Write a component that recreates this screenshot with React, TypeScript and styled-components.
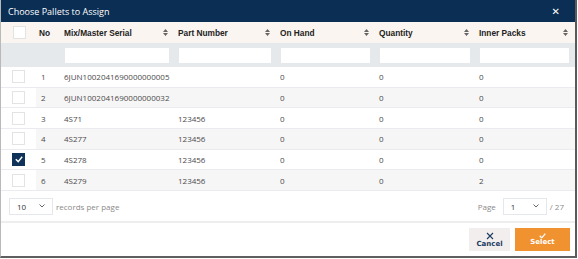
import styled, { createGlobalStyle } from "styled-components";

const GlobalStyle = createGlobalStyle`
  html, body {
    margin: 0;
    padding: 0;
    background: #ffffff;
  }
  body {
    font-family: "Open Sans", "Liberation Sans", sans-serif;
  }
`;

const COLS = "35px 25px 114px 102px 99px 100px 1fr";

const Modal = styled.div`
  width: 574px;
  height: 256px;
  border-left: 1px solid #b9b9b9;
  border-right: 2px solid #5a5a5a;
  border-bottom: 2px solid #5f5f5f;
  display: flex;
  flex-direction: column;
  background: #fff;
  overflow: hidden;
`;

const TitleBar = styled.div`
  height: 22px;
  background: #0b2e54;
  color: #fff;
  display: flex;
  align-items: center;
  justify-content: space-between;
  padding: 0 15px 0 7px;
  font-size: 9px;
  flex-shrink: 0;
`;

const Close = styled.span`
  font-family: "DejaVu Sans", sans-serif;
  font-size: 10px;
  font-weight: bold;
`;

const Row = styled.div<{ $bg?: string; $h: number; $line?: boolean }>`
  display: grid;
  grid-template-columns: ${COLS};
  height: ${(p) => p.$h}px;
  box-sizing: border-box;
  background: ${(p) => p.$bg ?? "#fff"};
  border-bottom: ${(p) => (p.$line ? "1px solid #e9ebef" : "none")};
  flex-shrink: 0;
`;

const HeadCell = styled.div`
  display: flex;
  align-items: center;
  justify-content: space-between;
  padding: 0 7px 0 3px;
  font-family: "Liberation Sans", Arial, sans-serif;
  font-weight: bold;
  font-size: 8.3px;
  color: #222;
`;

const FilterCell = styled.div`
  display: flex;
  align-items: center;
  padding: 0 6px 0 4px;
`;

const FilterInput = styled.div`
  height: 15px;
  width: 100%;
  background: #fff;
`;

const Cell = styled.div<{ $white?: boolean }>`
  display: flex;
  align-items: center;
  padding-left: 3px;
  font-size: 8px;
  color: #4a4a4a;
  background: ${(p) => (p.$white ? "#fff" : "transparent")};
`;

const Box = styled.div<{ $checked?: boolean }>`
  width: 13px;
  height: 13px;
  box-sizing: border-box;
  margin-left: 8px;
  background: ${(p) => (p.$checked ? "#0f3358" : "#fff")};
  border: 1px solid ${(p) => (p.$checked ? "#0f3358" : "#e3e3e3")};
  display: flex;
  align-items: center;
  justify-content: center;
`;

const Pager = styled.div`
  height: 30px;
  display: flex;
  align-items: center;
  justify-content: space-between;
  padding: 0 11px 0 8px;
  font-size: 8px;
  color: #8a8a8a;
  flex-shrink: 0;
`;

const PagerGroup = styled.div<{ $gap: number }>`
  display: flex;
  align-items: center;
  gap: ${(p) => p.$gap}px;
`;

const Select = styled.div<{ $w: number }>`
  width: ${(p) => p.$w}px;
  height: 17px;
  box-sizing: border-box;
  border: 1px solid #e4e7ec;
  display: flex;
  align-items: center;
  justify-content: space-between;
  padding: 0 7px 0 7px;
  font-size: 8px;
  color: #333;
`;

const Separator = styled.div`
  height: 2px;
  background: #eeeeee;
  flex-shrink: 0;
`;

const Actions = styled.div`
  flex: 1;
  display: flex;
  justify-content: flex-end;
  align-items: center;
  gap: 5px;
  padding: 0 5px 0 0;
`;

const ActionButton = styled.div<{ $primary?: boolean }>`
  height: 23px;
  width: ${(p) => (p.$primary ? 55 : 41)}px;
  background: ${(p) => (p.$primary ? "#f0922f" : "#f2eeee")};
  color: ${(p) => (p.$primary ? "#fff" : "#1b3b63")};
  display: flex;
  flex-direction: column;
  align-items: center;
  justify-content: center;
  font-family: "DejaVu Sans", sans-serif;
  font-weight: bold;
  font-size: 7px;
  line-height: 8px;
`;

const SortIcon = () => (
  <svg width="5" height="7" viewBox="0 0 5 7">
    <path d="M2.5 0 L5 3 H0 Z M0 4 H5 L2.5 7 Z" fill="#666" />
  </svg>
);

const Check = ({ color, size }: { color: string; size: number }) => (
  <svg width={size} height={size * 0.8} viewBox="0 0 10 8">
    <path d="M1 4 L4 7 L9 1" fill="none" stroke={color} strokeWidth="1.8" />
  </svg>
);

const Chevron = () => (
  <svg width="6" height="4" viewBox="0 0 6 4">
    <path d="M0.5 0.5 L3 3 L5.5 0.5" fill="none" stroke="#666" strokeWidth="1" />
  </svg>
);

const headers = ["Mix/Master Serial", "Part Number", "On Hand", "Quantity", "Inner Packs"];

const rows = [
  { no: 1, serial: "6JUN1002041690000000005", part: "", onHand: "0", qty: "0", inner: "0" },
  { no: 2, serial: "6JUN1002041690000000032", part: "", onHand: "0", qty: "0", inner: "0" },
  { no: 3, serial: "4S71", part: "123456", onHand: "0", qty: "0", inner: "0" },
  { no: 4, serial: "4S277", part: "123456", onHand: "0", qty: "0", inner: "0" },
  { no: 5, serial: "4S278", part: "123456", onHand: "0", qty: "0", inner: "0", checked: true },
  { no: 6, serial: "4S279", part: "123456", onHand: "0", qty: "0", inner: "2" },
];

export default function App() {
  return (
    <>
      <GlobalStyle />
      <Modal>
        <TitleBar>
          <span>Choose Pallets to Assign</span>
          <Close>✕</Close>
        </TitleBar>
        <Row $h={21} $bg="#faf5f0">
          <Cell>
            <Box style={{ marginLeft: 9 }} />
          </Cell>
          <HeadCell>No</HeadCell>
          {headers.map((h) => (
            <HeadCell key={h}>
              {h}
              <SortIcon />
            </HeadCell>
          ))}
        </Row>
        <Row $h={24} $bg="#e6e9ec">
          <div />
          <div />
          {headers.map((h) => (
            <FilterCell key={h}>
              <FilterInput />
            </FilterCell>
          ))}
        </Row>
        {rows.map((r, i) => (
          <Row key={r.no} $h={20.7} $line $bg={i % 2 ? "#f7f6f7" : "#fff"}>
            <Cell $white>
              <Box $checked={r.checked}>{r.checked && <Check color="#fff" size={8} />}</Box>
            </Cell>
            <Cell style={{ paddingLeft: 5 }}>{r.no}</Cell>
            <Cell>{r.serial}</Cell>
            <Cell>{r.part}</Cell>
            <Cell>{r.onHand}</Cell>
            <Cell>{r.qty}</Cell>
            <Cell>{r.inner}</Cell>
          </Row>
        ))}
        <Pager>
          <PagerGroup $gap={3}>
            <Select $w={44}>
              10
              <Chevron />
            </Select>
            records per page
          </PagerGroup>
          <PagerGroup $gap={3}>
            <span style={{ marginRight: 4 }}>Page</span>
            <Select $w={44}>
              1
              <Chevron />
            </Select>
            / 27
          </PagerGroup>
        </Pager>
        <Separator />
        <Actions>
          <ActionButton>
            <svg width="8" height="8" viewBox="0 0 8 8">
              <path d="M1 1 L7 7 M7 1 L1 7" stroke="#1b3b63" strokeWidth="1.1" />
            </svg>
            Cancel
          </ActionButton>
          <ActionButton $primary>
            <Check color="#fff" size={7} />
            Select
          </ActionButton>
        </Actions>
      </Modal>
    </>
  );
}
